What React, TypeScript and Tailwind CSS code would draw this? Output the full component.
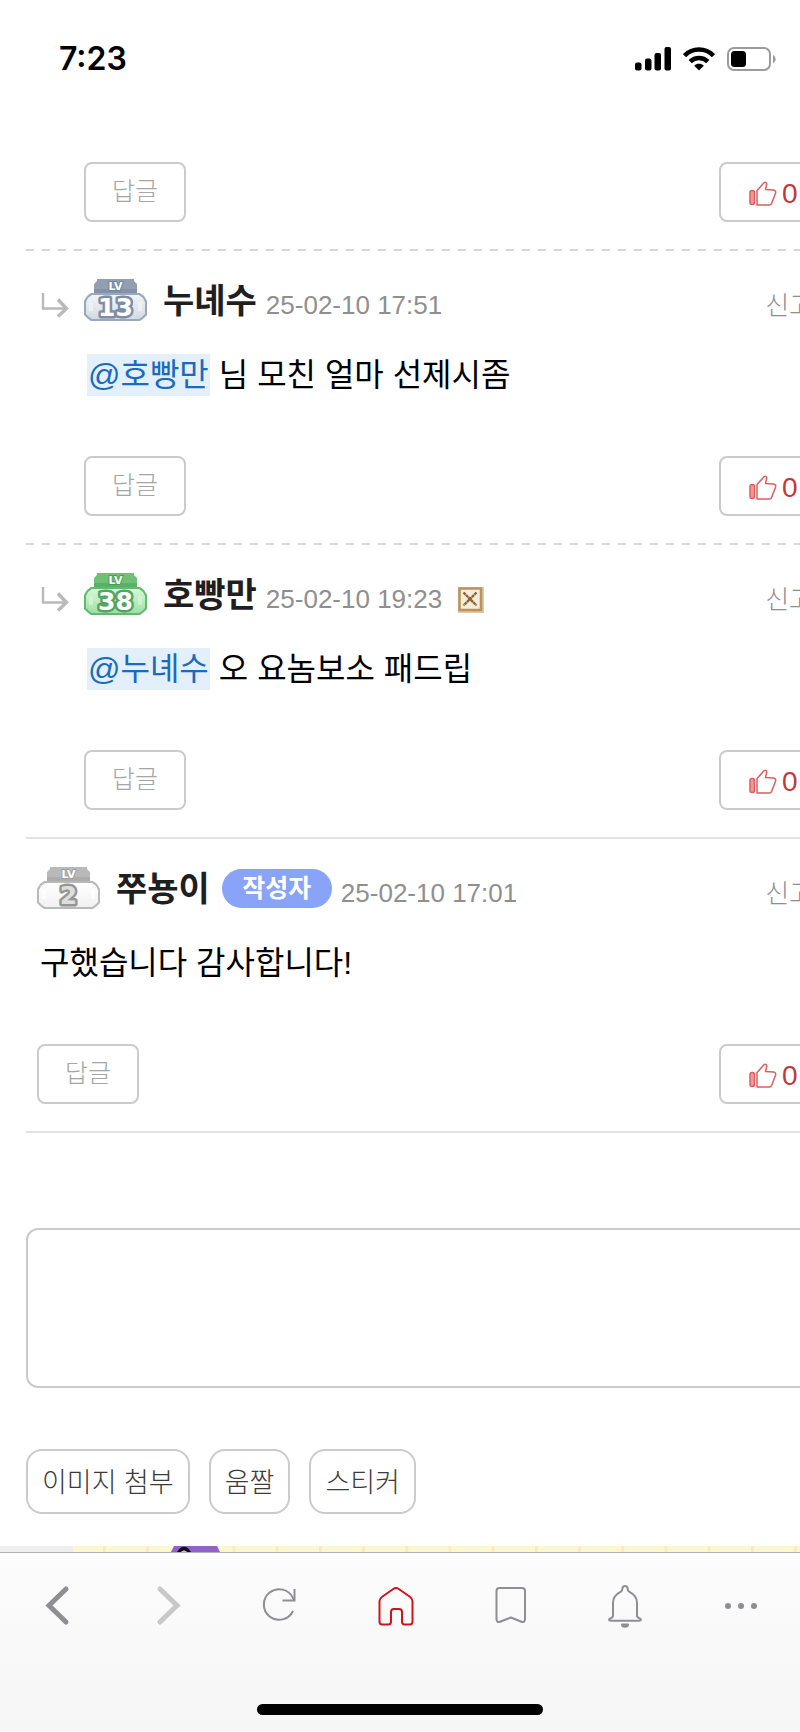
import type { ReactNode } from 'react';

const badgeColors = {
  steel: { cap: '#929eb1', dark: '#75849f', body: '#d3dbe3', light: '#f0f5f8', line: '#9aa8bd', digits: '#ffffff', outline: '#7f8ca4' },
  green: { cap: '#6fc077', dark: '#4a9e58', body: '#a0e0a5', light: '#d6f7d8', line: '#63b96e', digits: '#ffffff', outline: '#55a561' },
  gray: { cap: '#b9b9b9', dark: '#a0a0a0', body: '#f1f1f1', light: '#ffffff', line: '#b9b9b9', digits: '#dedede', outline: '#969696' },
};

type BadgeTone = keyof typeof badgeColors;

type Comment = {
  id: number;
  name: string;
  level: number;
  tone: BadgeTone;
  date: string;
  mention?: string;
  text: string;
  reply?: boolean;
  author?: boolean;
  deletable?: boolean;
  lastReply?: boolean;
};

const comments: Comment[] = [
  { id: 1, name: '누녜수', level: 13, tone: 'steel', date: '25-02-10 17:51', mention: '호빵만', text: '님 모친 얼마 선제시좀', reply: true },
  { id: 2, name: '호빵만', level: 38, tone: 'green', date: '25-02-10 19:23', mention: '누녜수', text: '오 요놈보소 패드립', reply: true, deletable: true, lastReply: true },
  { id: 3, name: '쭈뇽이', level: 2, tone: 'gray', date: '25-02-10 17:01', text: '구했습니다 감사합니다!', author: true, lastReply: true },
];

function LevelBadge({ level, tone }: { level: number; tone: BadgeTone }) {
  const c = badgeColors[tone];
  const id = `badge-${tone}`;

  return (
    <svg width="63" height="42" viewBox="0 0 63 42" className="shrink-0" role="img" aria-label={`LV ${level}`}>
      <defs>
        <linearGradient id={id} x1="0" y1="0" x2="0" y2="1">
          <stop offset="0" stopColor={c.light} />
          <stop offset="1" stopColor={c.body} />
        </linearGradient>
      </defs>
      <path d="M10 17V5l3-3V0h37v2l3 3v12z" fill={c.cap} />
      <path d="M10 10h43v6H10z" fill={c.dark} opacity="0.5" />
      <path d="M7 14h49l4 3 3 5v14l-3 3-4 3H7l-4-3-3-3V22l3-5z" fill={c.line} />
      <path d="M8 16h47l4 3 2 4v12l-3 3-3 2H8l-3-2-3-3V23l2-4z" fill={`url(#${id})`} />
      <path d="M5 23h4v9H5zM54 23h4v9h-4z" fill={c.light} opacity="0.7" />
      <text
        x="31.5"
        y="11"
        textAnchor="middle"
        fontSize="11"
        fontWeight="700"
        fill="#ffffff"
        stroke={c.dark}
        strokeWidth="2"
        paintOrder="stroke"
        className="font-['DejaVu_Sans',sans-serif]"
      >
        LV
      </text>
      <text
        x="31.5"
        y="37"
        textAnchor="middle"
        fontSize="25"
        fontWeight="700"
        fill={c.digits}
        stroke={c.outline}
        strokeWidth="5"
        strokeLinejoin="round"
        paintOrder="stroke"
        className="font-['DejaVu_Sans',sans-serif]"
      >
        {level}
      </text>
    </svg>
  );
}

function ReplyArrow() {
  return (
    <svg width="28" height="28" viewBox="0 0 28 28" fill="none" stroke="#b9b9b9" strokeWidth="2.4" className="mt-3 mr-[15px] shrink-0">
      <path d="M2 2v15.500h22" />
      <path d="M17 8.500l8.500 9-8.500 8" strokeWidth="3.400" />
    </svg>
  );
}

function ThumbIcon() {
  return (
    <svg width="28" height="26" viewBox="0 0 28 26" fill="none" stroke="#dd5f5f" strokeWidth="1.500" strokeLinejoin="round">
      <rect x="1" y="9.500" width="4.500" height="14" rx="2" fill="#ec9a9a" />
      <path d="M8 24h12.500c1 0 1.800-.6 2.100-1.500l4-10.500c.4-1.600-.5-2.700-2-3l-8.100-.5 1.200-5.500c.2-1.600-1.700-2.300-2.700-1.200L8 9.500z" />
    </svg>
  );
}

function DeleteIcon() {
  return (
    <svg width="26" height="26" viewBox="0 0 26 26" fill="none">
      <path d="M0 0h26v26H0z" fill="#dcc9ad" />
      <path d="M1.500 1.500h21.500v21.500H1.500z" fill="#f8ecd6" stroke="#b8925f" strokeWidth="2.500" />
      <path d="M5.500 5.500l13 13M18.500 5.500l-13 13" stroke="#866339" strokeWidth="2.400" strokeDasharray="3 .5" />
    </svg>
  );
}

function CommentActions() {
  return (
    <div className="flex justify-between pr-2">
      <button type="button" className="h-[60px] w-[102px] rounded-lg border-2 border-[#cbcbcb] text-[25px] font-light text-[#a6a6a6]">
        답글
      </button>
      <button
        type="button"
        className="flex h-[60px] w-[102px] items-center gap-[5px] rounded-lg border-2 border-[#cbcbcb] pt-[3px] pl-7 font-['Liberation_Sans',sans-serif] text-[28px] text-[#c03a3c]"
      >
        <ThumbIcon />
        0
      </button>
    </div>
  );
}

function Divider({ dashed }: { dashed?: boolean }) {
  return (
    <hr
      className={
        dashed
          ? 'h-[2px] border-0 bg-[repeating-linear-gradient(90deg,#d6d6d6_0px_8px,transparent_8px_16px)]'
          : 'h-[2px] border-0 bg-[#e2e2e2]'
      }
    />
  );
}

function CommentItem({ comment }: { comment: Comment }) {
  return (
    <>
      <article className={`flex pt-7 pb-[27px] ${comment.reply ? 'pl-[15px]' : 'pl-[11px]'}`}>
        {comment.reply && <ReplyArrow />}
        <div className="min-w-0 flex-1">
          <header className="flex h-[42px] items-center whitespace-nowrap">
            <LevelBadge level={comment.level} tone={comment.tone} />
            <a href="#user" className="ml-4 pt-[2px] text-[34px] leading-[42px] font-bold text-[#1f1f1f]">
              {comment.name}
            </a>
            {comment.author && (
              <span className="ml-3 flex h-[39px] w-[110px] items-center justify-center rounded-full bg-[#88a3f8] text-[25px] leading-[39px] font-bold text-white">
                작성자
              </span>
            )}
            <time className="ml-[9px] pt-[10px] font-['Liberation_Sans',sans-serif] text-[26px] leading-[34px] text-[#8f8f8f]">
              {comment.date}
            </time>
            {comment.deletable && (
              <button type="button" aria-label="삭제" className="mt-3 ml-4">
                <DeleteIcon />
              </button>
            )}
            <button type="button" className="mr-4 ml-auto pt-3 text-[26px] leading-[34px] font-light text-[#8f8f8f]">
              신고
            </button>
          </header>
          <p className="mt-[33px] mb-[60px] px-[3px] text-[32px] leading-[42px] text-black">
            {comment.mention && (
              <a href="#mention" className="mr-[9px] inline-block bg-[#e3f0fc] px-px text-[#1a6bbd]">
                @{comment.mention}
              </a>
            )}
            {comment.text}
          </p>
          <CommentActions />
        </div>
      </article>
      <Divider dashed={!comment.lastReply} />
    </>
  );
}

function StatusBar() {
  return (
    <div className="flex h-[118px] items-center justify-between pr-6 pl-[59px]">
      <span className="font-['Inter',sans-serif] text-[32px] leading-10 font-semibold text-black">7:23</span>
      <div className="flex items-center gap-3">
        <svg width="36" height="24" viewBox="0 0 36 24">
          <rect x="0" y="15.500" width="6.500" height="8" rx="2" />
          <rect x="10" y="11.500" width="6.500" height="12" rx="2" />
          <rect x="19.500" y="6" width="6.500" height="17.500" rx="2" />
          <rect x="29.500" y="0" width="6.500" height="23.500" rx="2" />
        </svg>
        <svg width="32" height="24" viewBox="0 0 32 24" fill="none" stroke="#000" strokeWidth="4.600">
          <path d="M1.500 8.700C9.500.5 22.500.5 30.500 8.700" />
          <path d="M7.200 14.700c5-4.900 12.600-4.900 17.600 0" />
          <path d="M11.200 18.700c2.700-2.600 6.900-2.600 9.600 0L16 23.500z" fill="#000" stroke="none" />
        </svg>
        <svg width="49" height="24" viewBox="0 0 49 24">
          <rect x="1" y="1" width="42" height="22" rx="6" fill="none" stroke="#9b9b9b" strokeWidth="2" />
          <rect x="4" y="4" width="15" height="16" rx="3.500" />
          <path d="M46 8c3.500 1.500 3.500 7 0 8z" fill="#9b9b9b" />
        </svg>
      </div>
    </div>
  );
}

function AdStrip() {
  return (
    <svg width="100%" height="6" className="block">
      <defs>
        <pattern id="tiles" x="103" width="43.200" height="6" patternUnits="userSpaceOnUse">
          <path d="M0 0h43.200v6H0z" fill="#faf8ce" />
          <path d="M0 0h2.500v6H0z" fill="#fbe8bb" />
        </pattern>
      </defs>
      <rect width="100%" height="6" fill="url(#tiles)" />
      <rect width="73" height="6" fill="#eeeeee" />
      <path d="M171 6l3-6h43l3 6z" fill="#9261c9" />
      <path d="M177 6c4-7 10-7 14 0h-4c-2-2-4-2-6 0z" fill="#111" />
      <path d="M181 6c2-2 4-2 6 0z" fill="#c9c9c9" />
    </svg>
  );
}

function NavButton({ label, color = '#8e8e93', width = 2, children }: { label: string; color?: string; width?: number; children: ReactNode }) {
  return (
    <button type="button" aria-label={label}>
      <svg
        width="64"
        height="64"
        viewBox="0 0 64 64"
        fill="none"
        stroke={color}
        strokeWidth={width}
        strokeLinecap="round"
        strokeLinejoin="round"
      >
        {children}
      </svg>
    </button>
  );
}

function BottomNav() {
  return (
    <footer className="border-t border-[#b3b3b0] bg-linear-to-b from-[#fcfcfc] to-[#f6f6f6] pb-4">
      <nav className="flex justify-between pt-5 pr-[27px] pl-[25px]">
        <NavButton label="뒤로" width={5}>
          <path d="M41 16L24 32.500 41 49" strokeLinejoin="miter" />
        </NavButton>
        <NavButton label="앞으로" color="#c8c8c8" width={5}>
          <path d="M21 16l17 16.500L21 49" strokeLinejoin="miter" />
        </NavButton>
        <NavButton label="새로고침">
          <path d="M40 38a15.300 15.300 0 1 1 0-13l1.500 2.500" strokeLinecap="butt" />
          <path d="M29.500 27.500h12V16" strokeLinecap="butt" strokeLinejoin="miter" />
        </NavButton>
        <NavButton label="홈" color="#d0121b">
          <path d="M26.200 16c2.200-1.500 3.400-1.500 5.600 0l11 7.800c1.800 1.300 2.700 2.200 2.700 4.200v20.800c0 1.800-.8 2.700-2.500 2.700h-5.500c-1.700 0-2.500-.9-2.500-2.700V39c0-2-1-3-3-3h-5c-2 0-3 1-3 3v9.800c0 1.800-.8 2.700-2.500 2.700H15c-1.700 0-2.500-.9-2.500-2.700V28c0-2 .9-2.900 2.700-4.200z" />
        </NavButton>
        <NavButton label="북마크">
          <path d="M15.500 18c0-2 1-3 3-3H41c2 0 3 1 3 3v28c0 2.500-1.500 3.600-3.500 2.800L29.800 44.500 19 48.800c-2 .8-3.500-.3-3.500-2.800z" />
        </NavButton>
        <NavButton label="알림">
          <path d="M30 13c-1.900 0-2.600 1.300-2.700 3.200 0 1.300-.6 1.900-1.800 2.600C21 21 18 24.500 18 30v12.500c0 1.500-.6 2.200-2.200 2.700-2.400.7-2.200 2.500 0 2.500h28.400c2.200 0 2.400-1.800 0-2.500-1.600-.5-2.200-1.200-2.200-2.700V30c0-5.500-3-9-7.500-11.200-1.200-.7-1.800-1.300-1.800-2.600-.1-1.900-.8-3.200-2.700-3.200z" />
          <path d="M27 51.500h6c0 3-6 3-6 0z" fill="#8e8e93" />
        </NavButton>
        <NavButton label="더보기">
          <g fill="#8e8e93" stroke="none">
            <circle cx="19" cy="33" r="3" />
            <circle cx="32" cy="33" r="3" />
            <circle cx="45" cy="33" r="3" />
          </g>
        </NavButton>
      </nav>
      <div className="mx-auto mt-[67px] h-[11px] w-[286px] rounded-full bg-black" />
    </footer>
  );
}

const tools = ['이미지 첨부', '움짤', '스티커'];

export default function App() {
  return (
    <div className="overflow-hidden bg-white font-['Liberation_Sans','Noto_Sans_CJK_KR',sans-serif]">
      <StatusBar />
      {/* the desktop-width list runs past the right edge of the screen */}
      <main className="-mr-[29px] pl-[26px]">
        <section aria-label="댓글">
          <div className="pt-11 pb-[27px] pl-[58px]">
            <CommentActions />
          </div>
          <Divider dashed />
          {comments.map((comment) => (
            <CommentItem key={comment.id} comment={comment} />
          ))}
        </section>
        <form className="pt-[95px]">
          <textarea aria-label="댓글 쓰기" className="block h-40 w-full resize-none rounded-xl border-2 border-[#cbcbcb] p-4 text-[32px]" />
          <div className="flex gap-[19px] pt-[61px] pb-8">
            {tools.map((tool) => (
              <button
                key={tool}
                type="button"
                className="h-[65px] rounded-2xl border-2 border-[#cbcbcb] px-[14px] pt-1 text-[27px] font-light text-[#3b3b3b]"
              >
                {tool}
              </button>
            ))}
          </div>
        </form>
      </main>
      <AdStrip />
      <BottomNav />
    </div>
  );
}
